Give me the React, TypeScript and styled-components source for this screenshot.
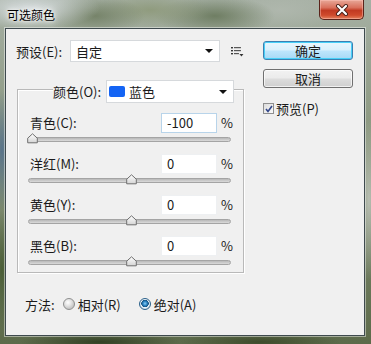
import React from "react";
import styled, { createGlobalStyle } from "styled-components";

const GlobalStyle = createGlobalStyle`
  html, body {
    margin: 0;
    padding: 0;
  }
  body {
    font-family: "Noto Sans CJK SC", "Noto Sans", sans-serif;
    font-size: 13px;
    color: #1b1b1b;
  }
`;

const Window = styled.div`
  width: 371px;
  height: 344px;
  display: flex;
  flex-direction: column;
  overflow: hidden;
  background:
    radial-gradient(ellipse 70px 22px at 30px 8px, rgba(214, 220, 222, 0.95), transparent),
    radial-gradient(ellipse 50px 20px at 95px 16px, rgba(110, 124, 96, 0.85), transparent),
    radial-gradient(ellipse 60px 18px at 150px 10px, rgba(140, 152, 120, 0.85), transparent),
    radial-gradient(ellipse 60px 20px at 215px 16px, rgba(98, 114, 84, 0.8), transparent),
    radial-gradient(ellipse 60px 20px at 280px 10px, rgba(176, 184, 174, 0.9), transparent),
    radial-gradient(ellipse 12px 60px at 2px 150px, rgba(84, 112, 140, 0.9), transparent),
    radial-gradient(ellipse 12px 60px at 2px 270px, rgba(70, 90, 50, 0.9), transparent),
    radial-gradient(ellipse 12px 80px at 369px 200px, rgba(190, 196, 186, 0.9), transparent),
    radial-gradient(ellipse 80px 10px at 100px 342px, rgba(48, 62, 34, 0.95), transparent),
    radial-gradient(ellipse 80px 10px at 260px 342px, rgba(60, 74, 42, 0.95), transparent),
    linear-gradient(180deg, #a6b0a4 0%, #87947a 45%, #5c6a4a 100%);
`;

const TitleBar = styled.div`
  height: 28px;
  display: flex;
  justify-content: space-between;
  align-items: flex-start;
  flex-shrink: 0;
`;

const Title = styled.div`
  padding-left: 7px;
  line-height: 30px;
  font-size: 12px;
  color: #000;
  text-shadow: 0 0 6px #fff, 0 0 3px #fff, 0 0 10px rgba(255, 255, 255, 0.9);
`;

const CloseButton = styled.div`
  width: 45px;
  height: 20px;
  margin-right: 7px;
  box-sizing: border-box;
  border: 1px solid #5a231a;
  border-top: none;
  border-radius: 0 0 5px 5px;
  background: linear-gradient(
    180deg,
    #e8a898 0%,
    #d9705c 40%,
    #c13a22 55%,
    #cf4a2c 80%,
    #e4825e 100%
  );
  box-shadow: inset 0 0 0 1px rgba(255, 200, 190, 0.45);
  display: flex;
  align-items: center;
  justify-content: center;
`;

const Client = styled.div`
  flex: 0 0 308px;
  margin: 0 6px 0 5px;
  box-sizing: border-box;
  border: 1px solid #3e4a4e;
  box-shadow: 0 0 0 1px rgba(255, 255, 255, 0.45);
  background: #f0f0f0;
  display: flex;
  padding: 11px 0 0 10px;
  gap: 19px;
`;

const LeftColumn = styled.div`
  width: 228px;
  display: flex;
  flex-direction: column;
`;

const RightColumn = styled.div`
  width: 90px;
  display: flex;
  flex-direction: column;
  padding-top: 1px;
`;

const PresetRow = styled.div`
  height: 22px;
  display: flex;
  align-items: center;
`;

const FieldLabel = styled.span<{ $width?: number }>`
  width: ${({ $width }) => ($width ? `${$width}px` : "auto")};
  flex-shrink: 0;
  white-space: nowrap;
`;

const Combo = styled.div<{ $width: number; $height: number }>`
  width: ${({ $width }) => $width}px;
  height: ${({ $height }) => $height}px;
  box-sizing: border-box;
  background: #fff;
  border: 1px solid #d6d9dc;
  display: flex;
  align-items: center;
  padding: 0 6px 0 2px;
  gap: 1px;
`;

const ComboText = styled.span`
  flex: 1;
  padding-left: 3px;
`;

const Arrow = styled.span`
  width: 0;
  height: 0;
  border-left: 4px solid transparent;
  border-right: 4px solid transparent;
  border-top: 4px solid #111;
`;

const MenuIcon = styled.svg`
  margin-left: 11px;
  margin-top: 1px;
`;

const Group = styled.fieldset`
  margin: 18px 0 0 1px;
  width: 227px;
  box-sizing: border-box;
  padding: 0 0 5px 10px;
  border: 1px solid #b9b9b9;
  box-shadow: 1px 1px 0 #fff, inset 1px 1px 0 #fff;
  min-inline-size: 0;
  display: flex;
  flex-direction: column;
  gap: 9px;
`;

const Legend = styled.legend`
  height: 18px;
  margin-left: 25px;
  padding: 0;
  display: flex;
  align-items: flex-start;
`;

const LegendInner = styled.div`
  height: 23px;
  display: flex;
  align-items: center;
  gap: 5px;
  background: #f0f0f0;
`;

const Swatch = styled.span<{ $color: string }>`
  width: 16px;
  height: 11px;
  border-radius: 2px;
  background: ${({ $color }) => $color};
`;

const Channels = styled.div`
  padding-top: 14px;
  display: flex;
  flex-direction: column;
  gap: 9px;
`;

const Channel = styled.div`
  display: flex;
  flex-direction: column;
  gap: 1px;
`;

const InputLine = styled.div`
  height: 21px;
  display: flex;
  align-items: center;
  padding-left: 2px;
`;

const NumberBox = styled.div<{ $focused?: boolean }>`
  width: 56px;
  height: 20px;
  box-sizing: border-box;
  background: #fff;
  border: 1px solid ${({ $focused }) => ($focused ? "#b8d4ea" : "#eef0f2")};
  padding-left: 5px;
  display: flex;
  align-items: center;
`;

const Percent = styled.span`
  margin-left: 4px;
`;

const SliderLine = styled.div`
  position: relative;
  width: 203px;
  height: 10px;
  display: flex;
  align-items: center;
`;

const Track = styled.div`
  width: 100%;
  height: 5px;
  box-sizing: border-box;
  border-radius: 3px;
  border: 1px solid #a4a4a4;
  background: linear-gradient(180deg, #b8b8b8, #dadada);
`;

const Thumb = styled.svg`
  position: absolute;
  top: -1px;
  margin-left: -5px;
`;

const MethodRow = styled.div`
  margin-top: 23px;
  height: 16px;
  display: flex;
  align-items: center;
  padding-left: 9px;
`;

const RadioItem = styled.span<{ $gap: number }>`
  display: flex;
  align-items: center;
  gap: 3px;
  margin-left: ${({ $gap }) => $gap}px;
`;

const RadioDot = styled.span<{ $checked?: boolean }>`
  width: 12px;
  height: 12px;
  box-sizing: border-box;
  border-radius: 50%;
  border: 1px solid ${({ $checked }) => ($checked ? "#2c628b" : "#8e8f8f")};
  background: ${({ $checked }) =>
    $checked
      ? "radial-gradient(circle at 50% 45%, #8fd0f5 0, #2b86c6 2px, #15507e 3.5px, #eaf4fb 4px, #c9d6e0 6px)"
      : "radial-gradient(circle at 40% 35%, #ffffff 0, #e6e6e6 3px, #c8c8c8 6px)"};
`;

const Button = styled.div<{ $primary?: boolean }>`
  height: 19px;
  box-sizing: border-box;
  border-radius: 3px;
  border: 1px solid ${({ $primary }) => ($primary ? "#3c7fb1" : "#707070")};
  background: ${({ $primary }) =>
    $primary
      ? "linear-gradient(180deg, #eaf6fd 0%, #d9f0fc 48%, #bee6fd 52%, #a7d9f5 100%)"
      : "linear-gradient(180deg, #f2f2f2 0%, #ebebeb 48%, #dddddd 52%, #cfcfcf 100%)"};
  box-shadow: ${({ $primary }) =>
    $primary ? "inset 0 0 0 1px #48d0f8" : "inset 0 0 0 1px rgba(255,255,255,0.7)"};
  display: flex;
  align-items: center;
  justify-content: center;
  line-height: 1;
  & + & {
    margin-top: 9px;
  }
`;

const CheckRow = styled.div`
  margin-top: 14px;
  height: 13px;
  display: flex;
  align-items: center;
  gap: 2px;
`;

const CheckBox = styled.span`
  width: 11px;
  height: 11px;
  box-sizing: border-box;
  border: 1px solid #8f8f8f;
  background: linear-gradient(135deg, #dcdcdc, #fbfbfb);
  display: flex;
  align-items: center;
  justify-content: center;
`;

const channels = [
  { label: "青色(C):", value: -100, focused: true },
  { label: "洋红(M):", value: 0 },
  { label: "黄色(Y):", value: 0 },
  { label: "黑色(B):", value: 0 },
];

function Slider({ value }: { value: number }) {
  const pct = 2 + ((value + 100) / 200) * 97;
  return (
    <SliderLine>
      <Track />
      <Thumb width="11" height="11" viewBox="0 0 11 11" style={{ left: `${pct}%` }}>
        <defs>
          <linearGradient id="th" x1="0" y1="0" x2="0" y2="1">
            <stop offset="0" stopColor="#ffffff" />
            <stop offset="1" stopColor="#d4d4d4" />
          </linearGradient>
        </defs>
        <polygon
          points="5.5,0.8 10.3,5.2 10.3,9.8 0.7,9.8 0.7,5.2"
          fill="url(#th)"
          stroke="#6e6e6e"
          strokeWidth="1"
          strokeLinejoin="round"
        />
      </Thumb>
    </SliderLine>
  );
}

export default function App() {
  return (
    <>
      <GlobalStyle />
      <Window>
        <TitleBar>
          <Title>可选颜色</Title>
          <CloseButton>
            <svg width="14" height="12" viewBox="0 0 14 12">
              <path d="M3 2 L11 10 M11 2 L3 10" stroke="#4a2018" strokeWidth="4" strokeLinecap="round" />
              <path d="M3 2 L11 10 M11 2 L3 10" stroke="#fff" strokeWidth="2.2" strokeLinecap="round" />
            </svg>
          </CloseButton>
        </TitleBar>
        <Client>
          <LeftColumn>
            <PresetRow>
              <FieldLabel $width={54}>预设(E):</FieldLabel>
              <Combo $width={151} $height={22}>
                <ComboText>自定</ComboText>
                <Arrow />
              </Combo>
              <MenuIcon width="13" height="11" viewBox="0 0 13 11">
                <rect x="0" y="1" width="2" height="1.4" fill="#333" />
                <rect x="0" y="4" width="2" height="1.4" fill="#333" />
                <rect x="0" y="7" width="2" height="1.4" fill="#333" />
                <rect x="3" y="1" width="7" height="1.2" fill="#555" />
                <rect x="3" y="4" width="7" height="1.2" fill="#555" />
                <rect x="3" y="7" width="5" height="1.2" fill="#555" />
                <polygon points="8.5,8 12.5,8 10.5,10.5" fill="#333" />
              </MenuIcon>
            </PresetRow>

            <Group>
              <Legend>
                <LegendInner>
                  <FieldLabel>颜色(O):</FieldLabel>
                  <Combo $width={128} $height={23}>
                    <Swatch $color="#1464f4" />
                    <ComboText>蓝色</ComboText>
                    <Arrow />
                  </Combo>
                </LegendInner>
              </Legend>
              <Channels>
                {channels.map((c) => (
                  <Channel key={c.label}>
                    <InputLine>
                      <FieldLabel $width={131}>{c.label}</FieldLabel>
                      <NumberBox $focused={c.focused}>{c.value}</NumberBox>
                      <Percent>%</Percent>
                    </InputLine>
                    <Slider value={c.value} />
                  </Channel>
                ))}
              </Channels>
            </Group>

            <MethodRow>
              <FieldLabel>方法:</FieldLabel>
              <RadioItem $gap={8}>
                <RadioDot />
                <span>相对(R)</span>
              </RadioItem>
              <RadioItem $gap={18}>
                <RadioDot $checked />
                <span>绝对(A)</span>
              </RadioItem>
            </MethodRow>
          </LeftColumn>

          <RightColumn>
            <Button $primary>确定</Button>
            <Button>取消</Button>
            <CheckRow>
              <CheckBox>
                <svg width="8" height="8" viewBox="0 0 8 8">
                  <path d="M1 4 L3 6.5 L7 1" stroke="#34488a" strokeWidth="1.6" fill="none" />
                </svg>
              </CheckBox>
              <span>预览(P)</span>
            </CheckRow>
          </RightColumn>
        </Client>
      </Window>
    </>
  );
}
